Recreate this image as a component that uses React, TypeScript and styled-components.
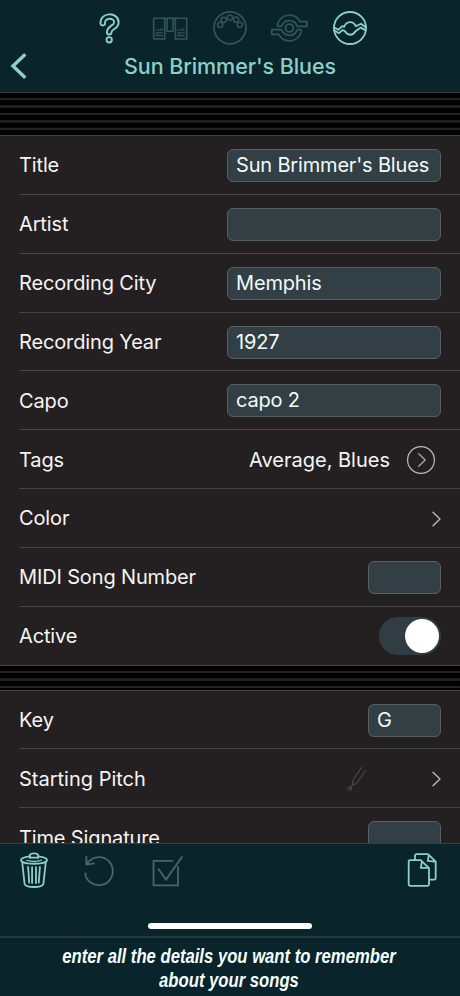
import React from 'react'
import styled, { createGlobalStyle } from 'styled-components'

const GlobalStyle = createGlobalStyle`
    * {
        box-sizing: border-box;
    }
    body {
        margin: 0;
        background-color: #0a242c;
    }
`

const Screen = styled.div`
    width: 460px;
    height: 996px;
    display: flex;
    flex-direction: column;
    overflow: hidden;
    background-color: #0a242c;
    color: #f5f5f5;
    font-family: Inter, 'Liberation Sans', sans-serif;
    font-size: 20px;
`

const Header = styled.header`
    height: 93px;
    flex: none;
    padding-top: 8px;
    border-bottom: 1px solid #2b3a40;
`

const ModeBar = styled.nav`
    height: 40px;
    display: grid;
    grid-template-columns: repeat(5, 60px);
    justify-content: center;
    justify-items: center;
`

const Icon = styled.svg<{ $dim?: boolean }>`
    display: block;
    flex: none;
    fill: none;
    stroke: ${(props) => (props.$dim ? '#34535a' : '#8dd0c6')};
    stroke-width: 1.8;
    stroke-linecap: round;
    stroke-linejoin: round;
`

const TitleBar = styled.div`
    height: 36px;
    display: grid;
    grid-template-columns: 40px 1fr 40px;
    align-items: center;
`

const PageTitle = styled.h1`
    margin: 0;
    color: #8dd0c6;
    font-size: 21.5px;
    font-weight: 500;
    line-height: 34px;
    letter-spacing: -0.08px;
    text-align: center;
    white-space: nowrap;
`

const Content = styled.main`
    height: 750px;
    flex: none;
    overflow: hidden;
`

const Stripes = styled.div<{ $height: number }>`
    height: ${(props) => props.$height}px;
    background: repeating-linear-gradient(
        #000000 0,
        #000000 4.6px,
        #222222 5.2px,
        #222222 7px,
        #000000 7.45px
    );
`

const Section = styled.section`
    background-color: #242021;
    border-top: 1px solid #424041;
`

const Row = styled.div`
    height: 58.85px;
    margin-left: 19px;
    padding: 1.4px 19px 0 0;
    display: flex;
    align-items: center;
    justify-content: space-between;
    border-bottom: 1px solid #464344;
    &.last {
        margin-left: 0;
        padding-left: 19px;
    }
`

const Label = styled.span<{ $spacing?: number }>`
    line-height: 30.6px;
    letter-spacing: ${(props) => props.$spacing ?? -0.14}px;
    white-space: nowrap;
`

const Field = styled.div<{ $small?: boolean }>`
    width: ${(props) => (props.$small ? 73 : 214)}px;
    height: 33px;
    padding-left: 8px;
    border: 1px solid #566062;
    border-radius: 6px;
    background-color: #323f45;
    color: #f0fbfb;
    line-height: 31.4px;
    letter-spacing: -0.17px;
    white-space: nowrap;
`

const RowValue = styled.div`
    display: flex;
    align-items: center;
    gap: 16px;
    margin-right: 5px;
`

const PitchValue = styled.div`
    display: flex;
    align-items: center;
    gap: 65px;
`

const Toggle = styled.div`
    width: 62px;
    height: 38px;
    margin-top: -1px;
    padding: 2px;
    display: flex;
    justify-content: flex-end;
    align-items: center;
    border-radius: 19px;
    background-color: #303d42;
`

const Knob = styled.span`
    width: 34px;
    height: 34px;
    border-radius: 17px;
    background-color: #ffffff;
`

const BottomBar = styled.footer`
    height: 93px;
    flex: none;
    display: flex;
    flex-direction: column;
    align-items: center;
    border-top: 1px solid #29414a;
`

const Tools = styled.div`
    width: 100%;
    height: 79px;
    padding: 8px 18px 0 14px;
    display: flex;
    gap: 26px;
    svg:last-child {
        margin-left: auto;
    }
`

const HomeIndicator = styled.div`
    width: 164px;
    height: 6px;
    border-radius: 3px;
    background-color: #ffffff;
`

const Caption = styled.div`
    height: 60px;
    flex: none;
    padding-top: 6px;
    border-top: 2px solid #243b43;
    color: #f4ffff;
    font-family: 'Liberation Sans', sans-serif;
    font-size: 20px;
    font-weight: 700;
    font-style: italic;
    line-height: 24px;
    text-align: center;
    white-space: nowrap;
    p {
        margin: 0 0 0 -2px;
        transform: scaleX(0.833);
    }
`

const HelpIcon = () => {
    const hook = 'M12.7 15.2C12.3 6.6 26.4 6.4 26.4 14.4C26.4 19.6 19.2 19 19.2 24.3'
    return (
        <Icon width="40" height="40" viewBox="0 0 40 40">
            <path d={hook} strokeWidth="6.4" />
            <path d={hook} stroke="#0a242c" strokeWidth="2.6" />
            <circle cx="19.2" cy="31.8" r="2.7" />
        </Icon>
    )
}

const PagesIcon = () => (
    <Icon $dim width="40" height="40" viewBox="0 0 40 40">
        <path d="M3.7 10.3H36.7V31H25.4V10.3M3.7 10.3V31H14.7V10.3M17 10.3V23.3H23.1V10.3" strokeWidth="1.6" />
        <path
            d="M6 22H12.5M6 24.8H12.5M6 27.7H12.5M11 20.8L12.6 22M7.5 26.5L6 27.7M27.8 22H34.2M27.8 24.8H34.2M27.8 27.7H34.2M32.8 20.8L34.2 22M29.3 26.5L27.8 27.7"
            strokeWidth="1.2"
        />
    </Icon>
)

const MidiIcon = () => (
    <Icon $dim width="40" height="40" viewBox="0 0 40 40">
        <circle cx="20" cy="19.8" r="16" />
        <circle cx="10.2" cy="16.8" r="2.6" strokeWidth="1.5" />
        <circle cx="13.8" cy="11.8" r="2.6" strokeWidth="1.5" />
        <circle cx="20" cy="9.5" r="2.6" strokeWidth="1.5" />
        <circle cx="26.1" cy="11.6" r="2.6" strokeWidth="1.5" />
        <circle cx="29.8" cy="16.8" r="2.6" strokeWidth="1.5" />
    </Icon>
)

const OrbitIcon = () => {
    const arm =
        'M7.4 16.6C9 10.8 13.7 7.2 19.4 7.2C24.3 7.2 28 9.6 30 13.7H37V18.3H27.4C25.8 14.8 23 12.7 19.4 12.7C15.9 12.7 13.2 14.6 12 17.4C11 19.2 7 18.6 7.4 16.6Z'
    return (
        <Icon $dim width="40" height="40" viewBox="0 0 40 40">
            <circle cx="19.4" cy="20" r="3.9" />
            <path d={arm} />
            <path d={arm} transform="rotate(180 19.4 20)" />
        </Icon>
    )
}

const SongIcon = () => (
    <Icon width="40" height="40" viewBox="0 0 40 40">
        <circle cx="20" cy="20" r="16" />
        <path d="M4 19.3L8.2 21.8L12.3 18.1L14.1 18.8C16.7 12.8 23.3 12.8 25.8 18.2L31 15.7L36 19.5" />
        <path d="M4 22.2L9 25.2L12.4 22.2L14.6 22.8C17.7 28 22.7 28 25.5 23.3L30.8 19.6L35.8 22.4" />
    </Icon>
)

const BackIcon = () => (
    <Icon width="40" height="36" viewBox="0 0 40 36">
        <path d="M25.3 6.2L13 18L25.3 29.8" strokeWidth="3.4" strokeLinecap="butt" strokeLinejoin="miter" />
    </Icon>
)

const Chevron = () => (
    <Icon width="9" height="16" viewBox="0 0 9 16">
        <path d="M1 1.2L8 8L1 14.8" stroke="#bcbcbc" strokeWidth="1.3" />
    </Icon>
)

const CircleChevron = () => (
    <Icon width="30" height="30" viewBox="0 0 30 30">
        <circle cx="15" cy="15" r="13.4" stroke="#bdbbbc" strokeWidth="1.2" />
        <path d="M12.7 8.7L19.2 15L12.7 21.3" stroke="#a8a6a7" strokeWidth="1.3" />
    </Icon>
)

const TuningFork = () => (
    <Icon width="20" height="26" viewBox="0 0 20 26">
        <g stroke="#555253" strokeWidth="1">
            <path d="M14.5 1.5L6.5 13.3C5 16.2 5.2 17.4 6.1 18.3L4.3 21M18.6 4.3L10.8 15.7C9.2 17.8 7.7 18.5 6.1 18.3" />
            <circle cx="3" cy="22.5" r="1.7" />
        </g>
    </Icon>
)

const TrashIcon = () => (
    <Icon width="40" height="42" viewBox="0 0 40 42">
        <path d="M15.7 5.8V3.4C16.4 0.7 23.6 0.7 24.3 3.4V5.8" />
        <path d="M15.7 4.3C10.2 5 7 6.2 7 8C7 13 33 13 33 8C33 6.2 29.8 5 24.3 4.3" />
        <path d="M16.5 5.7H23.5" />
        <path d="M8.3 11L10.6 32C12 36 28 36 29.4 32L31.7 11M14.1 14.8L15.2 30.5M18.1 15.2V31M22 15.2V31M25.9 14.8L24.8 30.5" />
        <path d="M12.5 8.3C17 9.7 23 9.7 27.5 8.3" strokeWidth="1.2" />
    </Icon>
)

const UndoIcon = () => (
    <Icon width="40" height="42" viewBox="0 0 40 42">
        <path
            d="M6.4 4.7V12.7L14 11.3M6.5 12.6C9.4 7.6 14.3 5.1 19.2 5.1C26.7 5.1 32.8 11.2 32.8 19C32.8 26.9 26.7 33.1 19.2 33.1C11.7 33.1 5.4 27.6 5.4 21.4"
            stroke="#47666d"
        />
    </Icon>
)

const CheckIcon = () => (
    <Icon width="40" height="42" viewBox="0 0 40 42">
        <path
            d="M26.4 8.9H7.5V33.4H32V14.9M12.5 17.1L20 27.6L36 4.9"
            stroke="#47666d"
            strokeLinejoin="miter"
        />
    </Icon>
)

const CopyIcon = () => (
    <Icon width="40" height="42" viewBox="0 0 40 42">
        <path d="M8.3 8.1H18.7L27 16.2V32.3Q27 33.8 25.5 33.8H8.3Q6.7 33.8 6.7 32.3V9.6Q6.7 8.1 8.3 8.1ZM20 9.3L18.8 15.8H26.7" />
        <path d="M13 7.8V3.8Q13 2.1 14.6 2.1H26L33.7 9.6V26Q33.7 27.6 32.2 27.6H27.3M26.8 3.1L25.8 8.8L33 9.7" />
    </Icon>
)

const songFields = [
    { label: 'Title', value: "Sun Brimmer's Blues" },
    { label: 'Artist', value: '' },
    { label: 'Recording City', value: 'Memphis' },
    { label: 'Recording Year', value: '1927' },
    { label: 'Capo', value: 'capo 2' },
]

const App = () => (
    <>
        <GlobalStyle />
        <Screen>
            <Header>
                <ModeBar>
                    <HelpIcon />
                    <PagesIcon />
                    <MidiIcon />
                    <OrbitIcon />
                    <SongIcon />
                </ModeBar>
                <TitleBar>
                    <BackIcon />
                    <PageTitle>Sun Brimmer's Blues</PageTitle>
                </TitleBar>
            </Header>
            <Content>
                <Stripes $height={42} />
                <Section>
                    {songFields.map((field) => (
                        <Row key={field.label}>
                            <Label>{field.label}</Label>
                            <Field>{field.value}</Field>
                        </Row>
                    ))}
                    <Row>
                        <Label>Tags</Label>
                        <RowValue>
                            <Label $spacing={0}>Average, Blues</Label>
                            <CircleChevron />
                        </RowValue>
                    </Row>
                    <Row>
                        <Label>Color</Label>
                        <Chevron />
                    </Row>
                    <Row>
                        <Label>MIDI Song Number</Label>
                        <Field $small />
                    </Row>
                    <Row className="last">
                        <Label>Active</Label>
                        <Toggle>
                            <Knob />
                        </Toggle>
                    </Row>
                </Section>
                <Stripes $height={24} />
                <Section>
                    <Row>
                        <Label>Key</Label>
                        <Field $small>G</Field>
                    </Row>
                    <Row>
                        <Label $spacing={0}>Starting Pitch</Label>
                        <PitchValue>
                            <TuningFork />
                            <Chevron />
                        </PitchValue>
                    </Row>
                    <Row>
                        <Label>Time Signature</Label>
                        <Field $small />
                    </Row>
                </Section>
            </Content>
            <BottomBar>
                <Tools>
                    <TrashIcon />
                    <UndoIcon />
                    <CheckIcon />
                    <CopyIcon />
                </Tools>
                <HomeIndicator />
            </BottomBar>
            <Caption>
                <p>enter all the details you want to remember</p>
                <p>about your songs</p>
            </Caption>
        </Screen>
    </>
)

export default App
